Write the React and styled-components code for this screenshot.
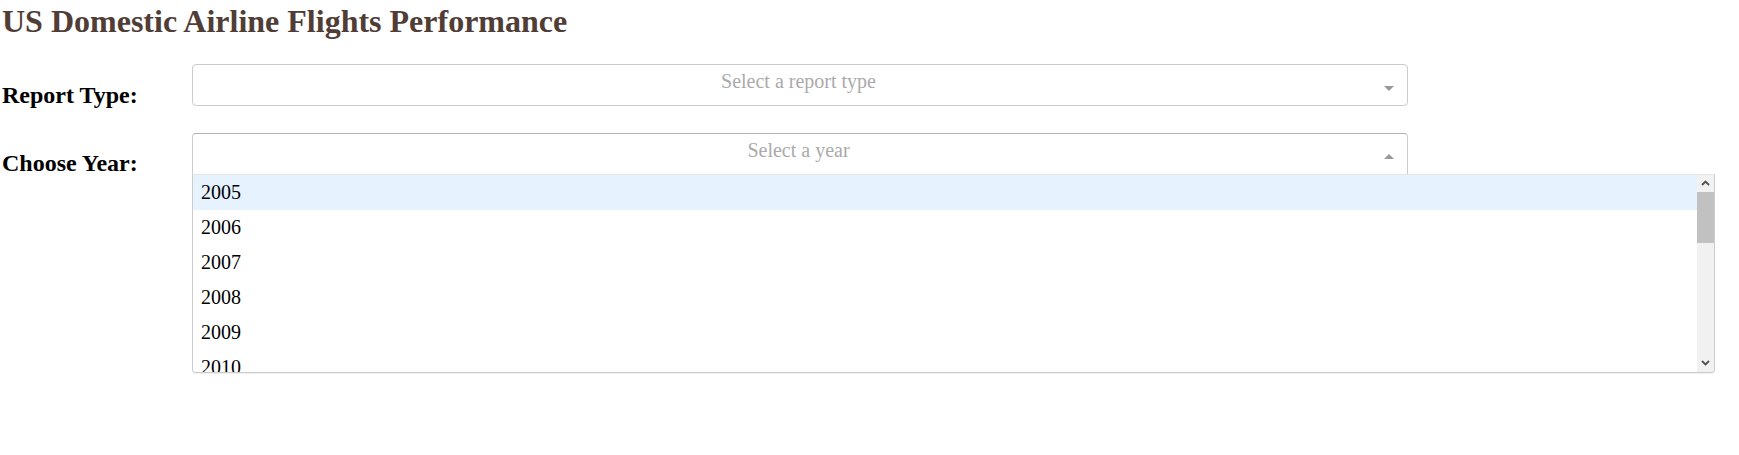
import React from "react";
import styled, { createGlobalStyle } from "styled-components";

const Global = createGlobalStyle`
  html, body { margin: 0; padding: 0; background: #fff; min-height: 100%; }
  body { font-family: "Liberation Serif", "Times New Roman", serif; color: #000; }
`;

const Page = styled.div`
  box-sizing: border-box;
  min-height: 455px;
  padding: 3px 0 0 2px;
`;

const Title = styled.h1`
  margin: 0 0 21.44px;
  font-size: 32px;
  font-weight: bold;
  line-height: 36.8px;
  color: #503d36;
  text-align: left;
`;

const Row = styled.div`
  display: flex;
  align-items: flex-start;
`;

const LabelCell = styled.div`
  width: 187px;
  flex: none;
`;

const Label = styled.h2`
  margin: 19.92px 0;
  font-size: 24px;
  font-weight: bold;
  line-height: 28.5px;
  white-space: nowrap;
`;

const DropdownWrap = styled.div`
  padding: 3px;
  font-size: 20px;
`;

const SelectRoot = styled.div`
  position: relative;
  width: 1216px;
  z-index: ${(p) => (p.$open ? 5 : 1)};
`;

const Control = styled.div`
  box-sizing: border-box;
  height: 42px;
  display: flex;
  align-items: center;
  background: #fff;
  border: 1px solid #ccc;
  border-color: ${(p) => (p.$open ? "#b3b3b3 #ccc #d9d9d9" : "#ccc")};
  border-radius: ${(p) => (p.$open ? "4px 4px 0 0" : "4px")};
`;

const Placeholder = styled.div`
  flex: 1;
  align-self: flex-start;
  padding-left: 25px;
  line-height: 33.5px;
  text-align: center;
  color: #aaa;
  white-space: nowrap;
`;

const ArrowZone = styled.div`
  width: 20px;
  padding: 6px 8px 0 0;
  display: flex;
  justify-content: center;
  align-items: center;
`;

const Arrow = styled.span`
  width: 0;
  height: 0;
  border-style: solid;
  border-width: ${(p) => (p.$up ? "0 5px 5px" : "5px 5px 0")};
  border-color: ${(p) =>
    p.$up ? "transparent transparent #999" : "#999 transparent transparent"};
`;

const Menu = styled.div`
  position: absolute;
  left: 0;
  top: calc(100% - 1px);
  width: 1521px;
  height: 197px;
  display: flex;
  background: #fff;
  border: 1px solid #ccc;
  border-top-color: #e6e6e6;
  border-radius: 0 0 4px 4px;
  box-shadow: 0 1px 0 rgba(0, 0, 0, 0.06);
  overflow: hidden;
`;

const OptionList = styled.div`
  flex: 1;
  overflow: hidden;
`;

const Option = styled.div`
  height: 35px;
  box-sizing: border-box;
  padding: 0 8px;
  line-height: 35px;
  color: #000;
  background: ${(p) => (p.$focused ? "#e6f2fe" : "#fff")};
`;

const ScrollBar = styled.div`
  width: 17px;
  flex: none;
  display: flex;
  flex-direction: column;
  background: #f1f1f1;
`;

const ScrollButton = styled.div`
  height: 17px;
  flex: none;
  display: flex;
  align-items: center;
  justify-content: center;
`;

const Track = styled.div`
  flex: 1;
`;

const Thumb = styled.div`
  height: 51px;
  background: #c1c1c1;
`;

const Chevron = ({ up }) => (
  <svg width="9" height="6" viewBox="0 0 9 6">
    <polyline
      points={up ? "1,5 4.5,1.5 8,5" : "1,1 4.5,4.5 8,1"}
      fill="none"
      stroke="#505050"
      strokeWidth="1.8"
    />
  </svg>
);

const years = Array.from({ length: 18 }, (_, i) => 2005 + i);

export default function App() {
  return (
    <>
      <Global />
      <Page>
        <Title>US Domestic Airline Flights Performance</Title>
        <Row>
          <LabelCell>
            <Label>Report Type:</Label>
          </LabelCell>
          <DropdownWrap>
            <SelectRoot>
              <Control>
                <Placeholder>Select a report type</Placeholder>
                <ArrowZone>
                  <Arrow />
                </ArrowZone>
              </Control>
            </SelectRoot>
          </DropdownWrap>
        </Row>
        <Row>
          <LabelCell>
            <Label>Choose Year:</Label>
          </LabelCell>
          <DropdownWrap>
            <SelectRoot $open>
              <Control $open>
                <Placeholder>Select a year</Placeholder>
                <ArrowZone>
                  <Arrow $up />
                </ArrowZone>
              </Control>
              <Menu>
                <OptionList>
                  {years.map((y, i) => (
                    <Option key={y} $focused={i === 0}>
                      {y}
                    </Option>
                  ))}
                </OptionList>
                <ScrollBar>
                  <ScrollButton>
                    <Chevron up />
                  </ScrollButton>
                  <Track>
                    <Thumb />
                  </Track>
                  <ScrollButton>
                    <Chevron />
                  </ScrollButton>
                </ScrollBar>
              </Menu>
            </SelectRoot>
          </DropdownWrap>
        </Row>
      </Page>
    </>
  );
}
